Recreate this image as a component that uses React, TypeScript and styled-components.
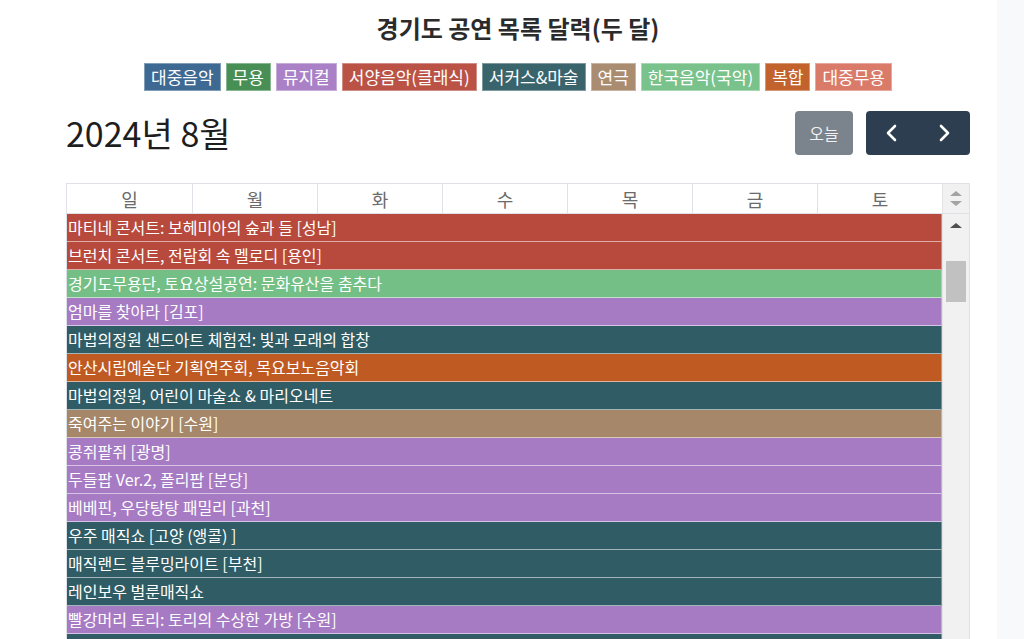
import React from 'react';
import styled, { createGlobalStyle } from 'styled-components';

const GlobalStyle = createGlobalStyle`
    html, body {
        margin: 0;
        padding: 0;
        background: #fff;
        overflow: hidden;
    }
    body {
        font-family: "Noto Sans CJK KR", "Noto Sans", "Liberation Sans", sans-serif;
        color: #212529;
    }
`;

type Genre = { name: string; color: string };

const GENRES: Record<string, Genre> = {
    pop: { name: '대중음악', color: '#33618e' },
    dance: { name: '무용', color: '#3f8a4d' },
    musical: { name: '뮤지컬', color: '#a67bc4' },
    classic: { name: '서양음악(클래식)', color: '#b74a3d' },
    circus: { name: '서커스&마술', color: '#2f5c65' },
    play: { name: '연극', color: '#a68769' },
    korean: { name: '한국음악(국악)', color: '#73bf86' },
    mixed: { name: '복합', color: '#bf5a22' },
    popDance: { name: '대중무용', color: '#d97362' },
};

const EVENTS: { title: string; genre: keyof typeof GENRES }[] = [
    { title: '마티네 콘서트: 보헤미아의 숲과 들 [성남]', genre: 'classic' },
    { title: '브런치 콘서트, 전람회 속 멜로디 [용인]', genre: 'classic' },
    { title: '경기도무용단, 토요상설공연: 문화유산을 춤추다', genre: 'korean' },
    { title: '엄마를 찾아라 [김포]', genre: 'musical' },
    { title: '마법의정원 샌드아트 체험전: 빛과 모래의 합창', genre: 'circus' },
    { title: '안산시립예술단 기획연주회, 목요보노음악회', genre: 'mixed' },
    { title: '마법의정원, 어린이 마술쇼 & 마리오네트', genre: 'circus' },
    { title: '죽여주는 이야기 [수원]', genre: 'play' },
    { title: '콩쥐팥쥐 [광명]', genre: 'musical' },
    { title: '두들팝 Ver.2, 폴리팝 [분당]', genre: 'musical' },
    { title: '베베핀, 우당탕탕 패밀리 [과천]', genre: 'musical' },
    { title: '우주 매직쇼 [고양 (앵콜) ]', genre: 'circus' },
    { title: '매직랜드 블루밍라이트 [부천]', genre: 'circus' },
    { title: '레인보우 벌룬매직쇼', genre: 'circus' },
    { title: '빨강머리 토리: 토리의 수상한 가방 [수원]', genre: 'musical' },
    { title: '', genre: 'circus' },
];

const DAYS = ['일', '월', '화', '수', '목', '금', '토'];

const Page = styled.div`
    display: flex;
    height: 639px;
    overflow: hidden;
`;

const Main = styled.main`
    flex: 1;
    padding: 13px 0 0 66px;
`;

const SideStrip = styled.aside`
    width: 27px;
    background: #f8f9fa;
`;

const Content = styled.div`
    width: 904px;
    display: flex;
    flex-direction: column;
`;

const Title = styled.h1`
    margin: 0;
    text-align: center;
    font-size: 24px;
    line-height: 30px;
    font-weight: 700;
    color: #2b2b2b;
`;

const Legend = styled.div`
    display: flex;
    justify-content: center;
    gap: 5px;
    margin-top: 20px;
`;

const Badge = styled.span<{ $color: string }>`
    background: ${p => p.$color};
    color: #fff;
    font-size: 17px;
    line-height: 26px;
    padding: 0 6px;
    border: 1px solid rgba(255, 255, 255, 0.35);
    opacity: 0.95;
`;

const Toolbar = styled.div`
    display: flex;
    align-items: center;
    justify-content: space-between;
    margin-top: 20px;
`;

const MonthTitle = styled.h2`
    margin: 0;
    font-size: 34px;
    line-height: 42px;
    font-weight: 400;
    color: #1e1e1e;
`;

const ButtonRow = styled.div`
    display: flex;
    gap: 13px;
`;

const TodayButton = styled.button`
    width: 58px;
    height: 44px;
    border: 0;
    border-radius: 4px;
    background: #7b838c;
    color: #f1f1f1;
    font-family: inherit;
    font-size: 16px;
`;

const NavGroup = styled.div`
    display: flex;
    background: #2c3e50;
    border-radius: 4px;
    overflow: hidden;
`;

const NavButton = styled.button`
    width: 52px;
    height: 44px;
    border: 0;
    background: transparent;
    display: flex;
    align-items: center;
    justify-content: center;
`;

const Calendar = styled.div`
    margin-top: 28px;
    border: 1px solid #dee2e6;
    border-bottom: 0;
`;

const HeaderRow = styled.div`
    display: flex;
    height: 29px;
    border-bottom: 1px solid #dee2e6;
`;

const DayGrid = styled.div`
    flex: 1;
    display: grid;
    grid-template-columns: repeat(7, 1fr);
`;

const DayCell = styled.div`
    display: flex;
    align-items: center;
    justify-content: center;
    color: #6b6b6b;
    font-size: 18px;
    border-left: 1px solid #dee2e6;
    &:first-child {
        border-left: 0;
    }
`;

const HeaderScroll = styled.div`
    width: 26px;
    background: #f1f1f1;
    border-left: 1px solid #e4e4e4;
    display: flex;
    flex-direction: column;
    align-items: center;
    justify-content: center;
    gap: 5px;
`;

const Body = styled.div`
    display: flex;
`;

const EventList = styled.div`
    flex: 1;
    display: flex;
    flex-direction: column;
`;

const EventRow = styled.div<{ $color: string }>`
    height: 27px;
    background: ${p => p.$color};
    border-bottom: 1px solid rgba(255, 255, 255, 0.55);
    border-right: 1px solid rgba(255, 255, 255, 0.35);
    color: #fff;
    font-size: 16px;
    line-height: 27px;
    padding-left: 1px;
    white-space: nowrap;
    overflow: hidden;
`;

const ScrollTrack = styled.div`
    width: 26px;
    background: #f1f1f1;
    border-left: 1px solid #e4e4e4;
    display: flex;
    flex-direction: column;
    align-items: center;
    padding-top: 9px;
`;

const ScrollThumb = styled.div`
    width: 20px;
    height: 41px;
    margin-top: 33px;
    background: #c1c1c1;
`;

const Triangle = styled.div<{ $dir: 'up' | 'down'; $color: string }>`
    width: 0;
    height: 0;
    border-left: 6px solid transparent;
    border-right: 6px solid transparent;
    ${p => p.$dir === 'up'
        ? `border-bottom: 5px solid ${p.$color};`
        : `border-top: 5px solid ${p.$color};`}
`;

const Chevron = ({ dir }: { dir: 'left' | 'right' }) => (
    <svg width="14" height="18" viewBox="0 0 14 18">
        <path
            d={dir === 'left' ? 'M10 2 L3 9 L10 16' : 'M4 2 L11 9 L4 16'}
            fill="none"
            stroke="#fff"
            strokeWidth="2.6"
            strokeLinecap="round"
            strokeLinejoin="round"
        />
    </svg>
);

export default function App() {
    return (
        <Page>
            <GlobalStyle />
            <Main>
                <Content>
                    <Title>경기도 공연 목록 달력(두 달)</Title>
                    <Legend>
                        {Object.values(GENRES).map(g => (
                            <Badge key={g.name} $color={g.color}>{g.name}</Badge>
                        ))}
                    </Legend>
                    <Toolbar>
                        <MonthTitle>2024년 8월</MonthTitle>
                        <ButtonRow>
                            <TodayButton>오늘</TodayButton>
                            <NavGroup>
                                <NavButton aria-label="prev"><Chevron dir="left" /></NavButton>
                                <NavButton aria-label="next"><Chevron dir="right" /></NavButton>
                            </NavGroup>
                        </ButtonRow>
                    </Toolbar>
                    <Calendar>
                        <HeaderRow>
                            <DayGrid>
                                {DAYS.map(d => <DayCell key={d}>{d}</DayCell>)}
                            </DayGrid>
                            <HeaderScroll>
                                <Triangle $dir="up" $color="#a3a3a3" />
                                <Triangle $dir="down" $color="#a3a3a3" />
                            </HeaderScroll>
                        </HeaderRow>
                        <Body>
                            <EventList>
                                {EVENTS.map((e, i) => (
                                    <EventRow key={i} $color={GENRES[e.genre].color}>{e.title}</EventRow>
                                ))}
                            </EventList>
                            <ScrollTrack>
                                <Triangle $dir="up" $color="#505050" />
                                <ScrollThumb />
                            </ScrollTrack>
                        </Body>
                    </Calendar>
                </Content>
            </Main>
            <SideStrip />
        </Page>
    );
}
